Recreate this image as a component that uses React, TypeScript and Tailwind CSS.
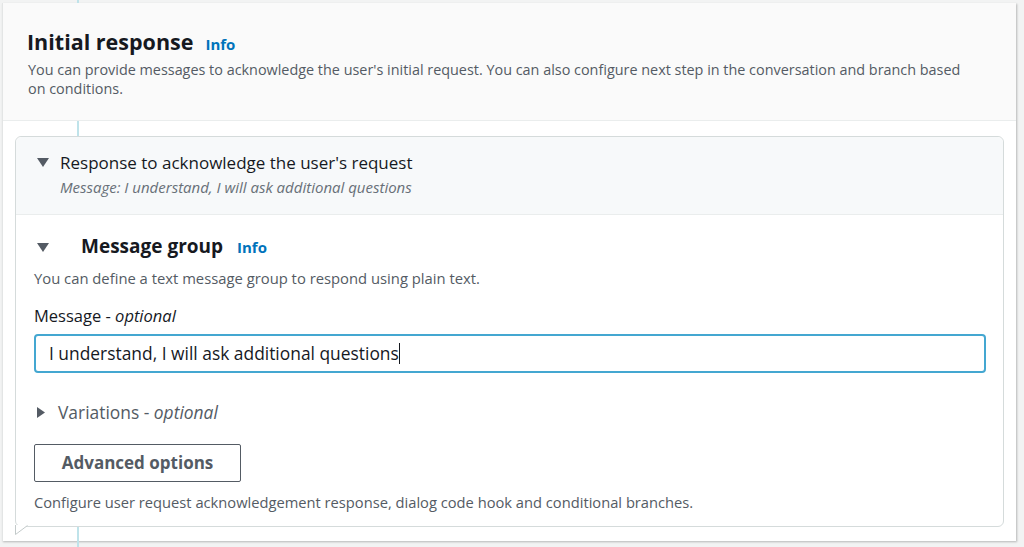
import type React from "react";

const DownCaret: React.FC = () => (
  <svg width="12" height="9" viewBox="0 0 12 9" className="shrink-0">
    <polygon points="0,0 12,0 6,9" fill="#545b64" />
  </svg>
);

const RightCaret: React.FC = () => (
  <svg width="8" height="11" viewBox="0 0 8 11" className="shrink-0">
    <polygon points="0,0 8,5.5 0,11" fill="#545b64" />
  </svg>
);

const App: React.FC = () => {
  return (
    <div
      className="relative w-[1024px] h-[547px] overflow-hidden bg-[#f2f3f3] pt-[3px] pl-[2px]"
      style={{ fontFamily: '"Open Sans", "Noto Sans", sans-serif' }}
    >
      {/* flow connector */}
      <div className="absolute left-[77px] top-0 w-[2px] h-full bg-[#bfe3ea] z-[1]" />

      <div className="w-[1014px] h-[538px] bg-white border-l border-[#e3e5e5] shadow-[1px_1px_2px_rgba(0,0,0,0.25)]">
        <div className="relative z-[2] bg-[#fafafa] border-b border-[#eaeded] h-[118px] pl-[25px] pr-6 pt-[25px]">
          <div className="flex items-baseline gap-[12px]">
            <h1 className="text-[21.5px] font-bold text-[#16191f] leading-[28px] -ml-[1px]">
              Initial response
            </h1>
            <span className="text-[15px] font-bold text-[#0073bb]">Info</span>
          </div>
          <p className="mt-[4px] text-[14.4px] leading-[19px] text-[#545b64] pr-[20px]">
            You can provide messages to acknowledge the user's initial request. You can also configure next step in the conversation and branch based on conditions.
          </p>
        </div>

        <div className="pl-[12px] pr-[13px] pt-[15px]">
          <div className="relative z-[2] w-[989px] h-[391px] bg-white border border-[#d5dbdb] rounded-[6px]">
            <div className="h-[78px] bg-[#f7f9fa] border-b border-[#eaeded] rounded-t-[6px] pl-[21px] pt-[14px]">
              <div className="flex items-center gap-[12px]">
                <DownCaret />
                <span className="text-[17px] text-[#16191f] leading-[23px] -ml-[1px]">
                  Response to acknowledge the user's request
                </span>
              </div>
              <div className="pl-[23px] mt-[3px] text-[15px] italic text-[#687078] leading-[20px]">
                Message: I understand, I will ask additional questions
              </div>
            </div>

            <div className="pl-[18px] pr-[18px] pt-[18px]">
              <div className="flex items-center">
                <div className="pl-[3px] pt-[3px]">
                  <DownCaret />
                </div>
                <h2 className="ml-[32px] text-[19px] font-bold text-[#16191f] leading-[26px]">
                  Message group
                </h2>
                <span className="ml-[14px] text-[15px] font-bold text-[#0073bb] pt-[2px]">Info</span>
              </div>
              <p className="mt-[9px] text-[14.8px] text-[#545b64] leading-[20px]">
                You can define a text message group to respond using plain text.
              </p>
              <div className="mt-[17px] text-[16.5px] text-[#16191f] leading-[22px]">
                Message - <span className="italic">optional</span>
              </div>
              <div className="mt-[7px] w-[952px] h-[39px] border-2 border-[#44a7d1] rounded-[4px] flex items-center pl-[13px] text-[17.4px] text-[#16191f]">
                <span>I understand, I will ask additional questions</span>
                <span className="w-px h-[21px] bg-[#16191f]" />
              </div>
              <div className="mt-[27px] flex items-center gap-[13px] pl-[3px]">
                <RightCaret />
                <span className="text-[17.4px] text-[#545b64] leading-[24px]">
                  Variations - <span className="italic">optional</span>
                </span>
              </div>
              <button className="mt-[20px] w-[207px] h-[38px] border border-[#545b64] rounded-[2px] bg-white text-[17px] font-bold text-[#545b64]">
                Advanced options
              </button>
              <p className="mt-[10px] text-[14.7px] text-[#545b64] leading-[20px]">
                Configure user request acknowledgement response, dialog code hook and conditional branches.
              </p>
            </div>

            {/* speech tail */}
            <svg
              width="16"
              height="12"
              viewBox="0 0 16 12"
              className="absolute left-[-1px] bottom-[-11px]"
            >
              <polygon points="0,0 0,10 13,0" fill="#ffffff" />
              <polyline points="0.5,0 0.5,9.5 12.5,0.5" fill="none" stroke="#c3caca" strokeWidth="1" />
            </svg>
          </div>
        </div>
      </div>
    </div>
  );
};

export default App;
